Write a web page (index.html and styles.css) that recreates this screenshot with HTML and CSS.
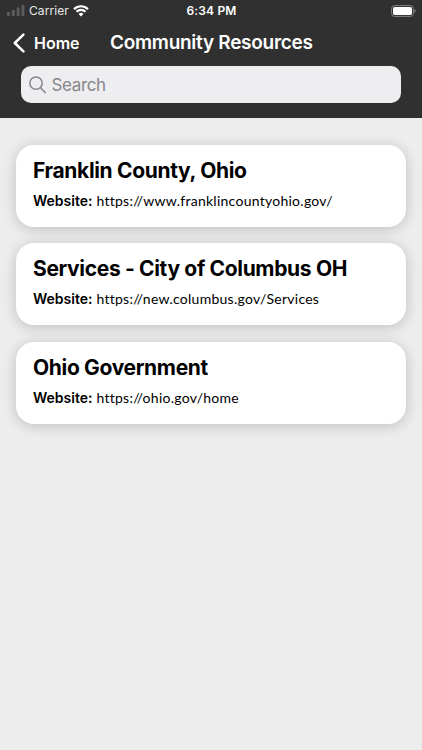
FILE: index.html
```html
<!DOCTYPE html>
<html lang="en">

<head>
    <meta charset="UTF-8">
    <title>Community Resources</title>
    <link rel="stylesheet" href="styles.css">
</head>

<body>
    <header class="top">
        <div class="status">
            <div class="carrier">
                <svg class="signal" width="18" height="11" viewBox="0 0 18 11">
                    <rect x="0" y="7" width="3" height="4" rx="0.8" />
                    <rect x="4.8" y="5" width="3" height="6" rx="0.8" />
                    <rect x="9.6" y="2.6" width="3" height="8.4" rx="0.8" />
                    <rect x="14.4" y="0" width="3" height="11" rx="0.8" />
                </svg>
                <span class="carrier-name">Carrier</span>
                <svg class="wifi" width="16" height="12" viewBox="0 0 16 12">
                    <path d="M1 4.1a10 10 0 0 1 14 0M3.5 6.8a6.4 6.4 0 0 1 9 0" />
                    <path class="wifi-dot" d="M5.6 9a3.5 3.5 0 0 1 4.8 0L8 11.5z" />
                </svg>
            </div>
            <div class="time"><span>6:34 PM</span></div>
            <div class="battery">
                <svg width="26" height="12" viewBox="0 0 26 12">
                    <rect class="battery-frame" x="0.6" y="0.6" width="21.8" height="10.8" rx="3" />
                    <rect x="2" y="2" width="19" height="8" rx="1.8" fill="#fff" />
                    <path d="M23.5 4c1.6.5 1.6 3.5 0 4z" fill="#8a8a8a" />
                </svg>
            </div>
        </div>

        <nav class="navbar">
            <a class="back">
                <svg width="12" height="20" viewBox="0 0 12 20">
                    <path d="M10.4 1.6L1.8 10l8.6 8.4" />
                </svg>
                <span class="back-text">Home</span>
            </a>
            <h1><span>Community Resources</span></h1>
        </nav>

        <div class="search">
            <svg width="18" height="18" viewBox="0 0 18 18">
                <circle cx="7" cy="7.1" r="6.2" />
                <path d="M11.5 11.8L16.2 16.6" />
            </svg>
            <span class="search-text">Search</span>
        </div>
    </header>

    <main class="resources">
        <article class="card">
            <h2><span>Franklin County, Ohio</span></h2>
            <p><b>Website:</b><span class="url">https://www.franklincountyohio.gov/</span></p>
        </article>
        <article class="card">
            <h2><span>Services - City of Columbus OH</span></h2>
            <p><b>Website:</b><span class="url">https://new.columbus.gov/Services</span></p>
        </article>
        <article class="card">
            <h2><span>Ohio Government</span></h2>
            <p><b>Website:</b><span class="url">https://ohio.gov/home</span></p>
        </article>
    </main>
</body>

</html>
```

FILE: styles.css
```css
* {
    box-sizing: border-box;
}

body {
    margin: 0;
    min-height: 750px;
    background-color: #ededed;
    font-family: Inter, "Liberation Sans", sans-serif;
    color: black;
}

.top {
    height: 118.4px;
    background-color: #303030;
    color: white;
}

.status {
    display: grid;
    grid-template-columns: 1fr auto 1fr;
    align-items: center;
    height: 21px;
    padding: 0 6px 0 7px;
    font-size: 12px;
}

.carrier {
    display: flex;
    align-items: center;
}

.signal {
    fill: #5c5c5c;
}

.carrier-name {
    margin-left: 4px;
    letter-spacing: 0.08px;
    color: #e8e8e8;
}

.wifi {
    margin-left: 4px;
    fill: none;
    stroke: white;
    stroke-width: 2.2;
}

.wifi-dot {
    fill: white;
    stroke: none;
}

.time {
    font-weight: 600;
    letter-spacing: 0.15px;
}

.battery {
    display: flex;
    justify-content: flex-end;
    margin-right: -1px;
}

.battery-frame {
    fill: none;
    stroke: #858585;
    stroke-width: 1;
}

.navbar {
    display: flex;
    align-items: center;
    height: 43px;
    padding-left: 13px;
}

.back {
    display: flex;
    align-items: center;
    width: 97px;
    font-size: 16px;
    font-weight: 600;
}

.back path {
    fill: none;
    stroke: white;
    stroke-width: 2.5;
    stroke-linecap: round;
    stroke-linejoin: round;
}

.back-text {
    margin-left: 9px;
}

h1 {
    margin: 0;
    font-size: 19px;
    font-weight: 600;
    letter-spacing: -0.28px;
    white-space: nowrap;
}

.search {
    display: flex;
    align-items: center;
    height: 37px;
    margin: 2px 21px 0;
    padding-left: 7.5px;
    border-radius: 10px;
    background-color: #eeeef0;
    color: #86868a;
    font-size: 17px;
}

.search svg {
    fill: none;
    stroke: #86868a;
    stroke-width: 1.5;
    stroke-linecap: round;
}

.search-text {
    margin-left: 5px;
    letter-spacing: -0.35px;
}

.resources {
    display: flex;
    flex-direction: column;
    gap: 16.5px;
    padding: 26.2px 16.4px;
}

.card {
    height: 82px;
    padding: 12px 16.6px;
    border-radius: 18px;
    background-color: white;
    box-shadow: 0 2px 14px rgba(0, 0, 0, 0.2);
}

h2 {
    margin: 0;
    font-size: 21px;
    line-height: 28px;
    letter-spacing: -0.34px;
    white-space: nowrap;
}

.card p {
    display: flex;
    align-items: baseline;
    margin: 6px 0 0;
    font-size: 14px;
    line-height: 20px;
    white-space: nowrap;
}

.card b {
    width: 63.5px;
    font-weight: 600;
}

.url {
    font-family: Lato, sans-serif;
    font-size: 14px;
    letter-spacing: 0.26px;
}
```
